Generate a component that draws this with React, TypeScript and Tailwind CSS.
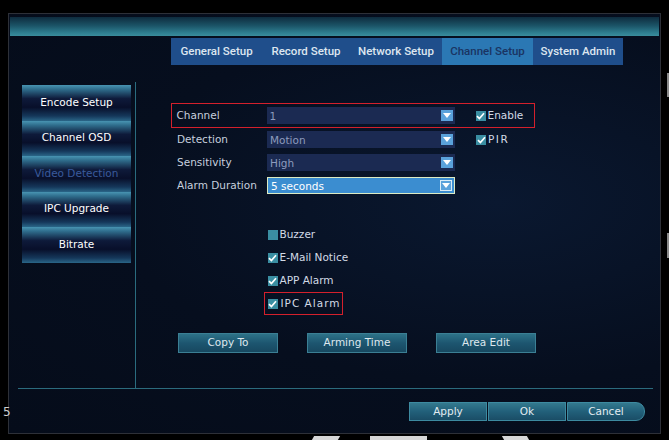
import React from "react";

const tabs = [
  { label: "General Setup", w: "w-[91px]" },
  { label: "Record Setup", w: "w-[88px]" },
  { label: "Network Setup", w: "w-[92px]" },
  { label: "Channel Setup", w: "w-[91px]", active: true },
  { label: "System Admin", w: "w-[90px]" },
];

const sideItems = ["Encode Setup", "Channel OSD", "Video Detection", "IPC Upgrade", "Bitrate"];

const Arrow = ({ boxed }: { boxed?: boolean }) => (
  <div
    className={`w-[12px] h-[11px] flex items-center justify-center bg-[#5aa2db] ${
      boxed ? "border border-[#d9ecf7]" : ""
    }`}
  >
    <svg width="8" height="5" viewBox="0 0 8 5">
      <path d="M0 0 H8 L4 5 Z" fill="#ffffff" />
    </svg>
  </div>
);

const Select = ({ value, active }: { value: string; active?: boolean }) => (
  <div
    className={`w-[188px] h-[17px] flex items-center justify-between pl-[3px] pr-[2px] text-[10.5px] ${
      active
        ? "bg-[#3b8dd0] border border-[#dcebc4] text-white"
        : "bg-[#1b2a52] text-[#8d9bbd]"
    }`}
  >
    <span className="leading-none mt-[2px]">{value}</span>
    <Arrow boxed={active} />
  </div>
);

const Check = ({ checked = true }: { checked?: boolean }) => (
  <div className="w-[10px] h-[10px] bg-[#3a8ea2] flex items-center justify-center shrink-0">
    {checked && (
      <svg width="9" height="8" viewBox="0 0 9 8">
        <path d="M1 4.2 L3.4 6.6 L8 1.2" stroke="#ffffff" strokeWidth="1.7" fill="none" />
      </svg>
    )}
  </div>
);

const Label = ({ children }: { children: React.ReactNode }) => (
  <div className="w-[90px] text-[10.5px] text-[#c6cfde] leading-none">{children}</div>
);

const ActionButton = ({ children }: { children: React.ReactNode }) => (
  <div className="w-[100px] h-[20px] flex items-center justify-center border border-[#3b7f94] bg-[linear-gradient(to_bottom,#2d7288_0%,#1d5670_50%,#174860_100%)] text-[10.5px] text-[#dfe8ee]">
    {children}
  </div>
);

const FooterButton = ({ children, last }: { children: React.ReactNode; last?: boolean }) => (
  <div
    className={`w-[78px] h-[19px] flex items-center justify-center border border-[#3d8aa0] bg-[linear-gradient(to_bottom,#33798e_0%,#22607a_50%,#1a4d66_100%)] text-[10.5px] text-[#e3ecf2] ${
      last ? "rounded-r-[9px]" : ""
    }`}
  >
    {children}
  </div>
);

export default function App() {
  return (
    <div className="relative w-[669px] h-[440px] overflow-hidden bg-black pl-[8px] pt-[13px] font-['DejaVu_Sans',sans-serif]">
      <div className="w-[653px] h-[421px] border border-[#2d3038] bg-[radial-gradient(ellipse_at_75%_45%,#0a1830_0%,#060e1e_55%,#050c1a_100%)] px-[1px] pt-[3px] flex flex-col">
        {/* title bar */}
        <div className="h-[19px] bg-[linear-gradient(to_bottom,#0e2c3e_0%,#1b5366_45%,#2f8092_85%,#3a8c9c_100%)]" />

        {/* tabs */}
        <div className="mt-[2px] h-[27px] flex pl-[161px]">
          {tabs.map((t) => (
            <div
              key={t.label}
              className={`${t.w} h-full flex items-center justify-center font-['Roboto',sans-serif] font-medium text-[11.5px] ${
                t.active ? "bg-[#2b78b4] text-[#1a3462]" : "bg-[#1f4e8b] text-[#dde6f0]"
              }`}
            >
              {t.label}
            </div>
          ))}
        </div>

        {/* body */}
        <div className="flex h-[323px]">
          <div className="mt-[17px] h-[306px] w-[126px] border-r border-[#2a6c7f] pl-[12px] pt-[3px] flex flex-col">
            {sideItems.map((s) => (
              <div
                key={s}
                className={`w-[109px] h-[35.5px] flex items-center justify-center text-[10.5px] bg-[linear-gradient(to_bottom,#4894b2_0%,#2f6d8c_12%,#0e1a3a_38%,#080f2a_62%,#15375a_86%,#2a6688_100%)] ${
                  s === "Video Detection" ? "text-[#3a5a9c]" : "text-white"
                }`}
              >
                {s}
              </div>
            ))}
          </div>

          <div className="flex-1 pl-[35px] pt-[38px] flex flex-col">
            {/* channel row with highlight */}
            <div className="w-[364px] h-[25px] border-[1.5px] border-[#d4202c] flex items-center pl-[4.5px]">
              <Label>Channel</Label>
              <Select value="1" />
              <div className="ml-[21px] flex items-center gap-[2px] text-[10.5px] text-[#d2dae6]">
                <Check />
                <span>Enable</span>
              </div>
            </div>
            <div className="h-[23px] flex items-center pl-[6px]">
              <Label>Detection</Label>
              <Select value="Motion" />
              <div className="ml-[21px] flex items-center gap-[2px] text-[10.5px] text-[#d2dae6] tracking-[1.5px]">
                <Check />
                <span>PIR</span>
              </div>
            </div>
            <div className="h-[23px] flex items-center pl-[6px]">
              <Label>Sensitivity</Label>
              <Select value="High" />
            </div>
            <div className="h-[23px] flex items-center pl-[6px]">
              <Label>Alarm Duration</Label>
              <Select value="5 seconds" active />
            </div>

            {/* alarm options */}
            <div className="mt-[26px] ml-[93px] flex flex-col text-[10.5px] text-[#d2dae6]">
              <div className="h-[23px] flex items-center border-[1.5px] border-transparent pl-[2.5px]">
                <Check checked={false} />
                <span className="ml-[2px]">Buzzer</span>
              </div>
              <div className="h-[23px] flex items-center border-[1.5px] border-transparent pl-[2.5px]">
                <Check />
                <span className="ml-[2px]">E-Mail Notice</span>
              </div>
              <div className="h-[23px] flex items-center border-[1.5px] border-transparent pl-[2.5px]">
                <Check />
                <span className="ml-[2px]">APP Alarm</span>
              </div>
              <div className="w-[79px] h-[23px] flex items-center border-[1.5px] border-[#d4202c] pl-[2.5px]">
                <Check />
                <span className="ml-[3px] tracking-[1px]">IPC Alarm</span>
              </div>
            </div>

            <div className="mt-[18px] ml-[7px] flex gap-[29px]">
              <ActionButton>Copy To</ActionButton>
              <ActionButton>Arming Time</ActionButton>
              <ActionButton>Area Edit</ActionButton>
            </div>
          </div>
        </div>

        <div className="h-px bg-[#2b6b7d] ml-[8px] mr-[6px]" />

        {/* footer */}
        <div className="flex justify-end gap-[1px] pt-[13px] pr-[14px]">
          <FooterButton>Apply</FooterButton>
          <FooterButton>Ok</FooterButton>
          <FooterButton last>Cancel</FooterButton>
        </div>
      </div>

      {/* overlays: stray digit, watermark fragments */}
      <div className="absolute left-[3px] top-[403px] text-[12px] text-[#cfcfcf]">5</div>
      <div className="absolute right-0 top-[73px] w-[2px] h-[24px] bg-[#8a8a8a]" />
      <div className="absolute right-0 top-[233px] w-[2px] h-[25px] bg-[#8a8a8a]" />
      <div className="absolute left-[313px] top-[436px] w-[26px] h-[4px] bg-[#d6d6d6] -skew-x-[30deg]" />
      <div className="absolute left-[370px] top-[436px] w-[57px] h-[4px] bg-[#d6d6d6]" />
      <div className="absolute left-[503px] top-[436px] w-[25px] h-[4px] bg-[#d6d6d6] skew-x-[30deg]" />
    </div>
  );
}
